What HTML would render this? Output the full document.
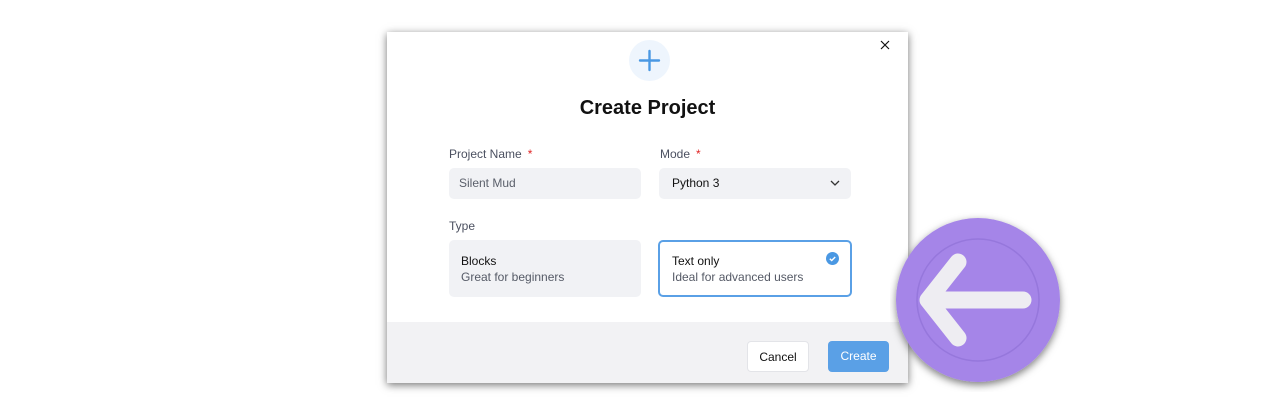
<!DOCTYPE html>
<html><head><style>
body{margin:0;width:1280px;height:420px;background:#fff;position:relative;overflow:hidden;font-family:"Liberation Sans",sans-serif}
.modal{position:absolute;left:387px;top:32px;width:521px;height:351px;background:#fff;box-shadow:0 2px 8px rgba(0,0,0,.55);overflow:hidden}
.plus{position:absolute;left:242px;top:8px;width:41px;height:41px;border-radius:50%;background:#eef5fd}
h1{position:absolute;left:0;width:521px;top:65px;margin:0;text-align:center;font-size:20px;font-weight:bold;color:#111}
.lbl{position:absolute;font-size:12px;color:#4b5060}
.lbl b{color:#e02424;font-weight:normal;margin-left:6px}
.inp{position:absolute;top:136px;width:192px;height:31px;background:#f1f2f5;border-radius:5px;font-size:12px;line-height:31px;padding-left:10px;box-sizing:border-box}
.card{position:absolute;top:208px;width:192px;height:57px;border-radius:5px;box-sizing:border-box;padding:13px 12px;font-size:12px;line-height:16px}
.foot{position:absolute;left:0;top:290px;width:521px;height:61px;background:#f2f2f4}
.btn{position:absolute;top:19px;height:31px;border-radius:4px;font-size:12px;line-height:31px;text-align:center;box-sizing:border-box}
</style></head><body>
<div class="modal">
 <div class="plus"><svg width="41" height="41"><path d="M20.5 11v19M11 20.5h19" stroke="#4a98e3" stroke-width="2.4" stroke-linecap="round"/></svg></div>
 <svg style="position:absolute;left:493px;top:8px" width="10" height="10"><path d="M1 1l8 8M9 1l-8 8" stroke="#111" stroke-width="1.2"/></svg>
 <h1>Create Project</h1>
 <div class="lbl" style="left:62px;top:115px">Project Name<b>*</b></div>
 <div class="lbl" style="left:273px;top:115px">Mode<b>*</b></div>
 <div class="inp" style="left:62px;color:#5a5f6a">Silent Mud</div>
 <div class="inp" style="left:272px;color:#111;padding-left:13px">Python 3<svg style="position:absolute;right:11px;top:12px" width="10" height="7"><path d="M1 1l4 4 4-4" stroke="#333" stroke-width="1.3" fill="none"/></svg></div>
 <div class="lbl" style="left:62px;top:187px">Type</div>
 <div class="card" style="left:62px;background:#f1f2f5"><div style="color:#111">Blocks</div><div style="color:#555a66">Great for beginners</div></div>
 <div class="card" style="left:271px;width:194px;border:2px solid #5aa0e6;padding:11px 12px"><div style="color:#111">Text only</div><div style="color:#555a66">Ideal for advanced users</div>
  <svg style="position:absolute;right:11px;top:10px" width="13" height="13"><circle cx="6.5" cy="6.5" r="6.5" fill="#4a98e3"/><path d="M3.8 6.7l1.9 1.8 3.5-3.5" stroke="#fff" stroke-width="1.4" fill="none"/></svg></div>
 <div class="foot">
  <div class="btn" style="left:360px;width:62px;background:#fff;border:1px solid #e3e4e8;color:#111">Cancel</div>
  <div class="btn" style="left:441px;width:61px;background:#5aa0e6;color:#fff">Create</div>
 </div>
</div>
<svg style="position:absolute;left:890px;top:212px" width="180" height="180">
 <defs><filter id="s" x="-20%" y="-20%" width="140%" height="140%"><feDropShadow dx="0" dy="3" stdDeviation="4" flood-color="#000" flood-opacity=".5"/></filter></defs>
 <circle cx="88" cy="88" r="82" fill="#a585e8" filter="url(#s)"/>
 <circle cx="88" cy="88" r="61" fill="none" stroke="#9677dc" stroke-width="1.5"/>
 <path d="M68 50L38 88l30 38" stroke="#eeedf2" stroke-width="17" stroke-linecap="round" stroke-linejoin="round" fill="none"/>
 <path d="M42 88h91" stroke="#eeedf2" stroke-width="17" stroke-linecap="round"/>
</svg>
</body></html>
